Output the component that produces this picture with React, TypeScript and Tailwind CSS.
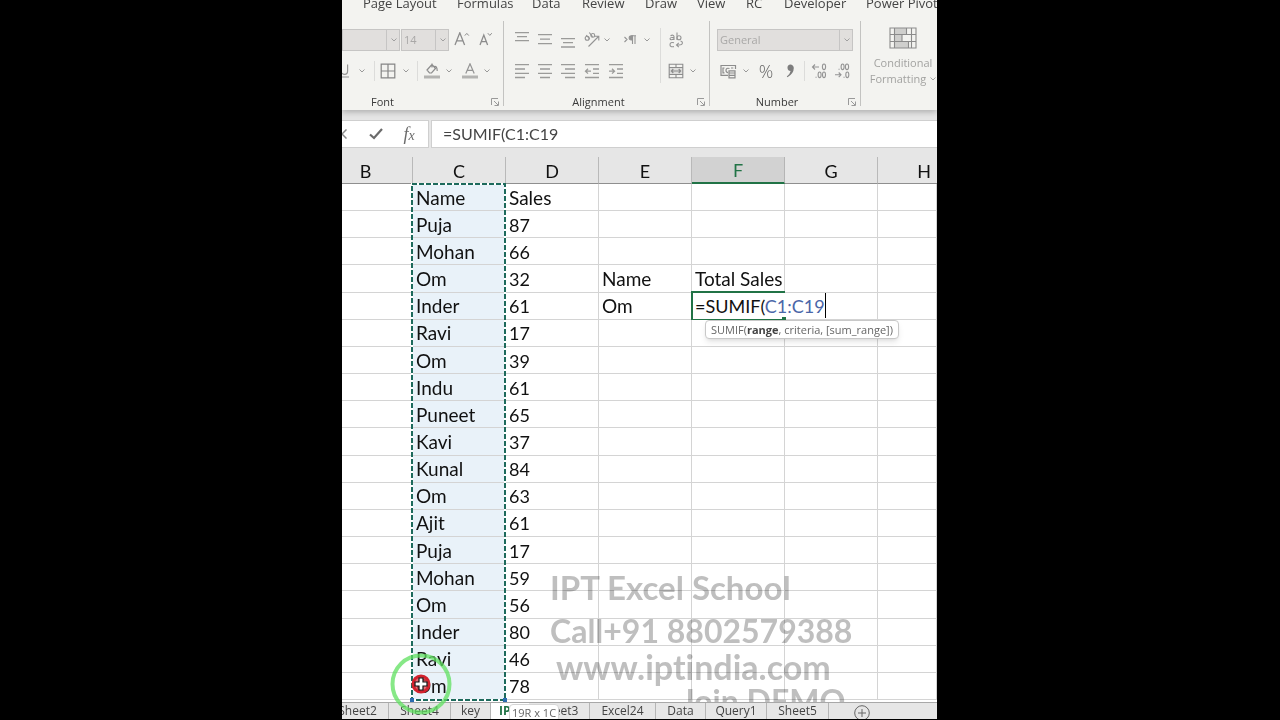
import { ReactNode } from 'react';

const ribbonTabs = [
    { name: 'Page Layout', width: 'w-[94px]' },
    { name: 'Formulas', width: 'w-[75px]' },
    { name: 'Data', width: 'w-[50px]' },
    { name: 'Review', width: 'w-[63px]' },
    { name: 'Draw', width: 'w-[52px]' },
    { name: 'View', width: 'w-[49px]' },
    { name: 'RC', width: 'w-[38px]' },
    { name: 'Developer', width: 'w-[82px]' },
    { name: 'Power Pivot', width: 'w-[80px]' },
];

const columns = ['B', 'C', 'D', 'E', 'F', 'G', 'H'];

const rows: [string, string][] = [
    ['Name', 'Sales'],
    ['Puja', '87'],
    ['Mohan', '66'],
    ['Om', '32'],
    ['Inder', '61'],
    ['Ravi', '17'],
    ['Om', '39'],
    ['Indu', '61'],
    ['Puneet', '65'],
    ['Kavi', '37'],
    ['Kunal', '84'],
    ['Om', '63'],
    ['Ajit', '61'],
    ['Puja', '17'],
    ['Mohan', '59'],
    ['Om', '56'],
    ['Inder', '80'],
    ['Ravi', '46'],
    ['Om', '78'],
];

function Chevron() {
    return (
        <svg width="6" height="4" viewBox="0 0 6 4" fill="none" stroke="currentColor" strokeWidth="1">
            <path d="M0.5 0.5 L3 3 L5.5 0.5" />
        </svg>
    );
}

function Tool({ label, width, children }: { label: string; width: string; children: ReactNode }) {
    return (
        <button type="button" aria-label={label} className={`flex h-6 shrink-0 items-center justify-center ${width}`}>
            {children}
        </button>
    );
}

function Lines({ d }: { d: string }) {
    return (
        <svg width="16" height="16" viewBox="0 0 16 16" fill="none" stroke="#9b9b99" strokeWidth="1.3">
            <path d={d} />
        </svg>
    );
}

function Picker({ label, value, width }: { label: string; value: string; width: string }) {
    return (
        <div className={`relative h-[22px] shrink-0 ${width}`}>
            <select aria-label={label} className="block h-full w-full appearance-none border border-[#c6c5c4] bg-[#e1dfdd] px-0.5 text-[11px] text-[#a9a8a7]">
                <option>{value}</option>
            </select>
            <span className="pointer-events-none absolute inset-y-0 right-0 flex w-[14px] items-center justify-center border-l border-[#c6c5c4] text-[#a0a0a0]">
                <Chevron />
            </span>
        </div>
    );
}

function GroupLabel({ name }: { name: string }) {
    return (
        <div className="relative mt-[11px] text-center text-[11px] leading-4 text-[#3a3a3a]">
            {name}
            <button type="button" aria-label={`${name} settings`} className="absolute right-1 top-1">
                <svg width="8" height="8" viewBox="0 0 8 8" fill="none" stroke="#999" strokeWidth="1">
                    <path d="M0.5 7 V0.5 H7 M3 3 L7 7 M7.5 3.5 V7.5 H3.5" />
                </svg>
            </button>
        </div>
    );
}

function FontGroup() {
    return (
        <section className="border-r border-[#c3c3c1]">
            <div className="flex h-6 items-center">
                <Picker label="Font name" value="" width="w-[58px]" />
                <div className="ml-px">
                    <Picker label="Font size" value="14" width="w-[48px]" />
                </div>
                <div className="ml-1">
                    <Tool label="Increase font size" width="w-[18px]">
                        <svg width="16" height="16" viewBox="0 0 16 16" fill="none" stroke="#8c8c8c" strokeWidth="1.3">
                            <path d="M1 13 L5.8 0.8 L10.6 13 M2.7 8.8 H8.9" />
                            <path d="M10.8 3.6 L12.8 1.4 L14.8 3.6" strokeWidth="1" />
                        </svg>
                    </Tool>
                </div>
                <div className="ml-1.5">
                    <Tool label="Decrease font size" width="w-[18px]">
                        <svg width="16" height="16" viewBox="0 0 16 16" fill="none" stroke="#8c8c8c" strokeWidth="1.3">
                            <path d="M2 13 L5.8 3 L9.6 13 M3.3 9.6 H8.3" />
                            <path d="M9.8 1.2 L11.8 3.4 L13.8 1.2" strokeWidth="1" />
                        </svg>
                    </Tool>
                </div>
            </div>
            <div className="mt-[7px] flex h-6 items-center text-[#999]">
                <Tool label="Underline" width="w-[8px]">
                    <svg width="8" height="16" viewBox="0 0 8 16" fill="none" stroke="#949494" strokeWidth="1.2">
                        <path d="M5.6 1.5 V8 Q5.6 11.4 2.6 11.4 Q0.6 11.4 0 10 M0 14 H7" />
                    </svg>
                </Tool>
                <Tool label="Underline options" width="w-[24px]"><Chevron /></Tool>
                <span className="h-5 w-px bg-[#dcdcda]" />
                <Tool label="Borders" width="w-[26px]">
                    <svg width="16" height="16" viewBox="0 0 16 16" fill="none" stroke="#858585" strokeWidth="1.2">
                        <path d="M1.2 1.2 H14.8 V14.8 H1.2 Z M8 1.2 V14.8 M1.2 8 H14.8" />
                    </svg>
                </Tool>
                <Tool label="Border options" width="w-[9px]"><Chevron /></Tool>
                <span className="ml-[7px] h-5 w-px bg-[#dcdcda]" />
                <Tool label="Fill colour" width="w-[28px]">
                    <svg width="16" height="16" viewBox="0 0 16 16" fill="none" stroke="#8c8c8c" strokeWidth="1.2">
                        <path d="M3 7 L8 1.5 L11.5 5.5 L7.5 10 H5.5 Z M8 4.5 V0.5 M10 3.5 Q13.2 2.5 13.2 8" />
                        <path d="M0 14 H16" stroke="#b3b3b1" strokeWidth="3" />
                    </svg>
                </Tool>
                <Tool label="Fill options" width="w-[6px]"><Chevron /></Tool>
                <div className="ml-[5px]">
                    <Tool label="Font colour" width="w-[26px]">
                        <svg width="16" height="16" viewBox="0 0 16 16" fill="none" stroke="#949494" strokeWidth="1.2">
                            <path d="M3.8 10.5 L8 0.8 L12.2 10.5 M5.2 7.3 H10.8" />
                            <path d="M0 14 H16" stroke="#b3b3b1" strokeWidth="3" />
                        </svg>
                    </Tool>
                </div>
                <Tool label="Font colour options" width="w-[8px]"><Chevron /></Tool>
            </div>
            <div className="-ml-20"><GroupLabel name="Font" /></div>
        </section>
    );
}

function AlignmentGroup() {
    return (
        <section className="border-r border-[#c3c3c1]">
            <div className="flex text-[#999]">
                <div className="w-[157px] border-r border-[#dcdcda] pl-1.5">
                    <div className="flex h-6 items-center">
                        <Tool label="Top align" width="w-[23px]"><Lines d="M1 0.7 H15 M3 4.7 H13 M1 8.7 H15" /></Tool>
                        <Tool label="Middle align" width="w-[23px]"><Lines d="M1 2.7 H15 M3 7.2 H13 M1 11.7 H15" /></Tool>
                        <Tool label="Bottom align" width="w-[23px]"><Lines d="M1 6.7 H15 M3 10.7 H13 M1 15 H15" /></Tool>
                        <Tool label="Orientation" width="w-[25px]">
                            <svg width="16" height="16" viewBox="0 0 16 16" fill="none" stroke="#949494" strokeWidth="1.1">
                                <circle cx="3.2" cy="6.2" r="2" />
                                <path d="M2.2 3 L5.8 7.2 M5.3 0.5 L8.6 4.8" />
                                <circle cx="8.8" cy="3.4" r="1.9" />
                                <path d="M4.5 14.5 L14.5 4.5 M10.5 4.2 H14.8 V8.5" />
                            </svg>
                        </Tool>
                        <Tool label="Orientation options" width="w-[6px]"><Chevron /></Tool>
                        <div className="ml-2">
                            <Tool label="Text direction" width="w-[24px]">
                                <svg width="14" height="12" viewBox="0 0 14 12" fill="none" stroke="#949494" strokeWidth="1.1">
                                    <path d="M1.5 3 L4 5.5 L1.5 8 M9.5 2 V10 M12 2 V10 M8.5 1.7 H13" />
                                    <path d="M9.5 1.7 H8.3 A2 2 0 0 0 8.3 6 H9.5 Z" fill="#949494" />
                                </svg>
                            </Tool>
                        </div>
                        <Tool label="Text direction options" width="w-[10px]"><Chevron /></Tool>
                    </div>
                    <div className="mt-[7px] flex h-6 items-center">
                        <Tool label="Align left" width="w-[23px]"><Lines d="M1 1.7 H15 M1 6 H11 M1 10.3 H15 M1 14.5 H11" /></Tool>
                        <Tool label="Center" width="w-[23px]"><Lines d="M1 1.7 H15 M3 6 H13 M1 10.3 H15 M3 14.5 H13" /></Tool>
                        <Tool label="Align right" width="w-[23px]"><Lines d="M1 1.7 H15 M5 6 H15 M1 10.3 H15 M5 14.5 H15" /></Tool>
                        <Tool label="Decrease indent" width="w-[25px]"><Lines d="M1 1.7 H15 M9 6 H15 M9 10.3 H15 M1 14.5 H15 M7 8.2 H1.5 M4 5.8 L1.5 8.2 L4 10.6" /></Tool>
                        <Tool label="Increase indent" width="w-[23px]"><Lines d="M1 1.7 H15 M9 6 H15 M9 10.3 H15 M1 14.5 H15 M1 8.2 H6.5 M4 5.8 L6.5 8.2 L4 10.6" /></Tool>
                    </div>
                </div>
                <div className="pl-0.5">
                    <Tool label="Wrap text" width="w-[25px]">
                        <svg width="16" height="16" viewBox="0 0 16 16" fill="none" stroke="#949494" strokeWidth="1.1">
                            <path d="M2.5 3.8 Q5.5 2.2 6 4.5 V8 M6 5.3 Q2 5.3 2 6.9 Q2.5 8.6 6 6.8 M9 0.5 V8 M6 10.8 Q2 9.8 2 12.7 Q2 15.4 6 14.6" />
                            <circle cx="11" cy="5.7" r="2" />
                            <path d="M12.5 9 Q14.8 9.5 14.3 11.5 Q14 13 11 13 H8.5 M10.8 10.8 L8.5 13 L10.8 15.2" />
                        </svg>
                    </Tool>
                    <div className="mt-[7px] flex h-6 items-center">
                        <Tool label="Merge and center" width="w-[25px]">
                            <svg width="16" height="16" viewBox="0 0 16 16" fill="none" stroke="#8c8c8c" strokeWidth="1.1">
                                <path d="M1.2 4.5 H14.8 V11.5 H1.2 Z" fill="#dededc" stroke="none" />
                                <path d="M1.2 1.2 H14.8 V14.8 H1.2 Z M1.2 4.5 H14.8 M1.2 11.5 H14.8 M8 1.2 V4.5 M8 11.5 V14.8 M3.5 8 H12.5 M5.3 6 L3.3 8 L5.3 10 M10.7 6 L12.7 8 L10.7 10" />
                            </svg>
                        </Tool>
                        <Tool label="Merge options" width="w-[10px]"><Chevron /></Tool>
                    </div>
                </div>
            </div>
            <div className="-ml-4"><GroupLabel name="Alignment" /></div>
        </section>
    );
}

function NumberGroup() {
    return (
        <section className="border-r border-[#c3c3c1]">
            <div className="flex h-6 items-center pl-[7px]">
                <Picker label="Number format" value="General" width="w-[136px]" />
            </div>
            <div className="mt-[7px] flex h-6 items-center pl-[5px] text-[#999]">
                <Tool label="Accounting format" width="w-[26px]">
                    <svg width="17" height="16" viewBox="0 0 17 16" fill="none" stroke="#8c8c8c" strokeWidth="1.2">
                        <path d="M8 12.3 H1 V2.5 H15.5 V6 M4.5 5 H3 V9.8 H4.5 M9.5 5.5 Q6 4.5 6 7.3 Q6 9.5 8 9.7 M11 5 H13.3" />
                        <path d="M9 7.8 H15 V14.8 H9 Z M9 10 H15 M9 12.4 H15" />
                    </svg>
                </Tool>
                <Tool label="Accounting options" width="w-[9px]"><Chevron /></Tool>
                <button type="button" className="ml-1 h-6 w-6 text-lg font-light leading-6 text-[#666]">%</button>
                <Tool label="Comma style" width="w-[24px]">
                    <svg width="10" height="14" viewBox="0 0 10 14" fill="#7d7d7d">
                        <path d="M5 0.5 A3.4 3.4 0 0 1 8.8 4 Q8.8 9.5 2.5 13.2 L1.8 12.4 Q5.3 9.6 5.6 7 A3.3 3.3 0 0 1 5 0.5 Z" />
                    </svg>
                </Tool>
                <span className="ml-0.5 h-5 w-px bg-[#dcdcda]" />
                <div className="ml-1">
                    <Tool label="Increase decimal" width="w-[20px]">
                        <svg width="16" height="16" viewBox="0 0 16 16" fill="none" stroke="#949494" strokeWidth="1.1">
                            <path d="M8 4 H1.5 M4 1.5 L1.5 4 L4 6.5 M4.5 14.2 H5.6" />
                            <ellipse cx="13" cy="3.8" rx="1.6" ry="2.8" />
                            <ellipse cx="8.6" cy="11.8" rx="1.5" ry="2.8" />
                            <ellipse cx="13" cy="11.8" rx="1.5" ry="2.8" />
                        </svg>
                    </Tool>
                </div>
                <div className="ml-[3px]">
                    <Tool label="Decrease decimal" width="w-[20px]">
                        <svg width="16" height="16" viewBox="0 0 16 16" fill="none" stroke="#949494" strokeWidth="1.1">
                            <path d="M1 11.8 H7 M4.7 9.5 L7 11.8 L4.7 14.1 M4.5 6.2 H5.6 M9.5 14.2 H10.6" />
                            <ellipse cx="8.6" cy="3.8" rx="1.5" ry="2.8" />
                            <ellipse cx="13" cy="3.8" rx="1.6" ry="2.8" />
                            <ellipse cx="13.3" cy="11.8" rx="1.5" ry="2.8" />
                        </svg>
                    </Tool>
                </div>
            </div>
            <div className="-ml-4"><GroupLabel name="Number" /></div>
        </section>
    );
}

function Ribbon() {
    return (
        <header className="bg-[#f3f3f0] shadow-[0_2px_6px_rgba(0,0,0,0.25)]">
            <nav className="flex h-5 overflow-hidden pl-[21px] text-[13px] text-[#444]">
                {ribbonTabs.map((tab) => (
                    <a key={tab.name} href="#" className={`-mt-[5px] h-4 shrink-0 whitespace-nowrap leading-4 ${tab.width}`}>
                        {tab.name}
                    </a>
                ))}
            </nav>
            <div className="grid grid-cols-[162px_206px_151px_1fr] pb-1 pt-px [&>section]:h-[85px] [&>section]:pt-[7px]">
                <FontGroup />
                <AlignmentGroup />
                <NumberGroup />
                <section className="overflow-hidden">
                    <button type="button" className="-mt-px flex w-[84px] flex-col items-center text-[11px] leading-4 text-[#a3a3a1]">
                        <svg width="28" height="22" viewBox="0 0 28 22" fill="none" stroke="#8b8b8b" strokeWidth="1.1">
                            <path d="M6 1 H17 V7.5 H6 Z M6 7.5 H13 V14.5 H6 Z M6 14.5 H19 V21 H6 Z" fill="#cfcfcd" stroke="none" />
                            <path d="M1 1 H27 V21 H1 Z M1 7.5 H27 M1 14.5 H27 M5.5 1 V21 M22.5 1 V21 M17.5 1 V7.5 M13 7.5 V14.5 M19.5 14.5 V21" />
                        </svg>
                        <span className="mt-1.5">Conditional</span>
                        <span className="flex items-center gap-1">Formatting <Chevron /></span>
                    </button>
                </section>
            </div>
        </header>
    );
}

function FormulaBar() {
    return (
        <div className="mt-2.5 flex h-[28px] text-[#6b6b6b]">
            <div className="flex w-[87px] items-center border border-l-0 border-[#cfcfcf] bg-white">
                <Tool label="Cancel" width="w-[5px]">
                    <svg width="5" height="10" viewBox="0 0 5 10" fill="none" stroke="#8a8a8a" strokeWidth="1.5">
                        <path d="M4.5 0.5 L0 5 L4.5 9.5" />
                    </svg>
                </Tool>
                <div className="ml-4">
                    <Tool label="Enter" width="w-[26px]">
                        <svg width="14" height="12" viewBox="0 0 14 12" fill="none" stroke="#6b6b6b" strokeWidth="2.2">
                            <path d="M1 6.5 L5 10 L13 1" />
                        </svg>
                    </Tool>
                </div>
                <button type="button" aria-label="Insert function" className="ml-2 h-6 w-6 font-['Liberation_Serif',serif] text-lg italic leading-6">
                    f<span className="text-sm">x</span>
                </button>
            </div>
            <input
                aria-label="Formula"
                defaultValue="=SUMIF(C1:C19"
                className="ml-0.5 min-w-0 flex-1 border border-r-0 border-[#cfcfcf] bg-white pl-[11px] font-[Lato,sans-serif] text-base text-[#444] outline-none"
            />
        </div>
    );
}

function EditedCell() {
    return (
        <>
            <div className="absolute -inset-x-px -top-0.5 -bottom-px border-2 border-[#217346]" />
            <div className="absolute inset-y-0 left-px z-10 flex items-center whitespace-nowrap bg-white pl-0.5 text-lg leading-6">
                <span role="textbox" aria-label="Cell F5">
                    =SUMIF(<span className="text-[#4a66a8]">C1:C19</span>
                </span>
                <span className="h-[25px] w-px bg-black" />
            </div>
            <span className="absolute -bottom-0.5 -right-0.5 z-10 h-1 w-1 bg-[#217346]" />
            <div className="absolute left-[13px] top-[27px] z-20 whitespace-nowrap rounded border border-[#c8c8c8] bg-white px-[5px] font-['Open_Sans',sans-serif] text-[11px] leading-[17px] text-[#666] shadow-md">
                SUMIF(<b className="text-[#444]">range</b>, criteria, [sum_range])
            </div>
        </>
    );
}

function Sheet() {
    return (
        <main className="relative mt-[9px] min-h-0 flex-1 bg-white pb-0.5 font-[Lato,sans-serif] text-[19px] leading-6 text-[#111]">
            <table className="h-full w-full table-fixed border-separate border-spacing-0">
                <colgroup>
                    <col className="w-[71px]" />
                    <col className="w-[93px]" />
                    <col className="w-[93px]" />
                    <col className="w-[93px]" />
                    <col className="w-[93px]" />
                    <col className="w-[93px]" />
                    <col />
                </colgroup>
                <thead>
                    <tr className="h-[27px] text-lg leading-6">
                        {columns.map((c) => (
                            <th
                                key={c}
                                className={`border-b border-r p-0 font-normal ${c === 'F' ? 'border-b-2 border-b-[#217346] border-r-[#b5b5b5] bg-[#d2d2d2] pt-px text-[#217346]' : 'border-b-[#8f8f8f] border-r-[#b9b9b9] bg-[#e6e6e6] pt-px'} ${c === 'B' ? 'pr-[23px]' : ''} ${c === 'H' ? 'border-r-0 pl-[33px]' : ''}`}
                            >
                                {c}
                            </th>
                        ))}
                    </tr>
                </thead>
                <tbody>
                    {rows.map(([name, sales], i) => (
                        <tr key={i} className="[&>td]:border-b [&>td]:border-r [&>td]:border-[#d4d4d4] [&>td]:px-[3px] [&>td]:pb-0 [&>td]:pt-px">
                            <td />
                            <td className="bg-[#e9f2f9]">{name}</td>
                            <td className={i === 0 ? '' : 'text-lg leading-6'}>{sales}</td>
                            <td>{i === 3 ? 'Name' : i === 4 ? 'Om' : ''}</td>
                            <td className="relative whitespace-nowrap">
                                {i === 3 && 'Total Sales'}
                                {i === 4 && <EditedCell />}
                            </td>
                            <td />
                            <td />
                        </tr>
                    ))}
                </tbody>
            </table>

            {/* marching ants round C1:C19 */}
            <svg className="absolute left-[69px] top-[26px] h-[calc(100%-29px)] w-[96px] overflow-visible" fill="none">
                <rect x="1" y="1" width="93" height="100%" stroke="#fff" strokeWidth="2" />
                <rect x="1" y="1" width="93" height="100%" stroke="#1d6a5c" strokeWidth="2" strokeDasharray="5 2" />
                <svg y="100%" overflow="visible">
                    <path d="M-1 -1 h4 v4 h-4 Z M92 -1 h4 v4 h-4 Z" fill="#2b6cb0" />
                </svg>
            </svg>

            <div className="pointer-events-none absolute inset-0 overflow-hidden whitespace-nowrap font-bold text-[#bfbfbf] mix-blend-multiply">
                <div className="absolute left-[208px] top-[410px] text-[32px] leading-10 [font-variant-ligatures:none]">
                    <p className="text-[33px]">IPT Excel School</p>
                    <p className="mt-1">Call+91 8802579388</p>
                    <p className="-mt-1 pl-1.5 text-[34px]">www.iptindia.com</p>
                    <p className="-mt-1.5 pl-[131px]">Join DEMO</p>
                </div>
            </div>

            <svg className="pointer-events-none absolute -bottom-3.5 left-[47px] z-20" width="64" height="64" viewBox="0 0 64 64" fill="none">
                <circle cx="32" cy="32" r="28.5" stroke="#5fe05f" strokeOpacity="0.75" strokeWidth="4" />
                <circle cx="32" cy="32" r="8" fill="#e2434c" fillOpacity="0.75" stroke="#d3222d" strokeWidth="3" />
                <path d="M30 26 H34 V30 H38 V34 H34 V38 H30 V34 H26 V30 H30 Z" fill="#fff" stroke="#111" strokeWidth="1.2" />
            </svg>
        </main>
    );
}

function SheetTab({ name, width }: { name: string; width: string }) {
    return (
        <button type="button" className={`h-4 shrink-0 whitespace-nowrap border-r border-[#b5b5b5] text-center ${width}`}>
            {name}
        </button>
    );
}

function SheetTabs() {
    return (
        <footer className="relative flex h-[17px] shrink-0 overflow-hidden border-t border-[#a8a8a8] bg-[#e6e6e6] text-xs leading-4 text-[#444]">
            <div className="-ml-[15px] flex">
                <SheetTab name="Sheet2" width="w-[62px]" />
                <SheetTab name="Sheet4" width="w-[62px]" />
                <SheetTab name="key" width="w-[40px]" />
                <button type="button" className="h-4 w-[38px] shrink-0 bg-white pl-2 text-left font-bold text-[#217346]">IPT</button>
                <SheetTab name="Sheet3" width="w-[61px]" />
                <SheetTab name="Excel24" width="w-[66px]" />
                <SheetTab name="Data" width="w-[50px]" />
                <SheetTab name="Query1" width="w-[61px]" />
                <SheetTab name="Sheet5" width="w-[62px]" />
            </div>
            <button type="button" aria-label="New sheet" className="ml-[25px] mt-0.5 shrink-0">
                <svg width="16" height="16" viewBox="0 0 16 16" fill="none" stroke="#666" strokeWidth="1">
                    <circle cx="8" cy="8" r="7.3" />
                    <path d="M8 4 V12 M4 8 H12" />
                </svg>
            </button>
            <div className="absolute left-[167px] top-px rounded-sm border border-[#d5d5d5] bg-white px-0.5 text-[11px] leading-4 text-[#666]">
                19R x 1C
            </div>
        </footer>
    );
}

export default function App() {
    return (
        <div className="h-screen bg-black pb-px">
            <div className="mx-auto flex h-full w-full max-w-[596px] flex-col overflow-hidden border-r border-black bg-[#e6e6e6] font-['Open_Sans',sans-serif]">
                <Ribbon />
                <FormulaBar />
                <Sheet />
                <SheetTabs />
            </div>
        </div>
    );
}
